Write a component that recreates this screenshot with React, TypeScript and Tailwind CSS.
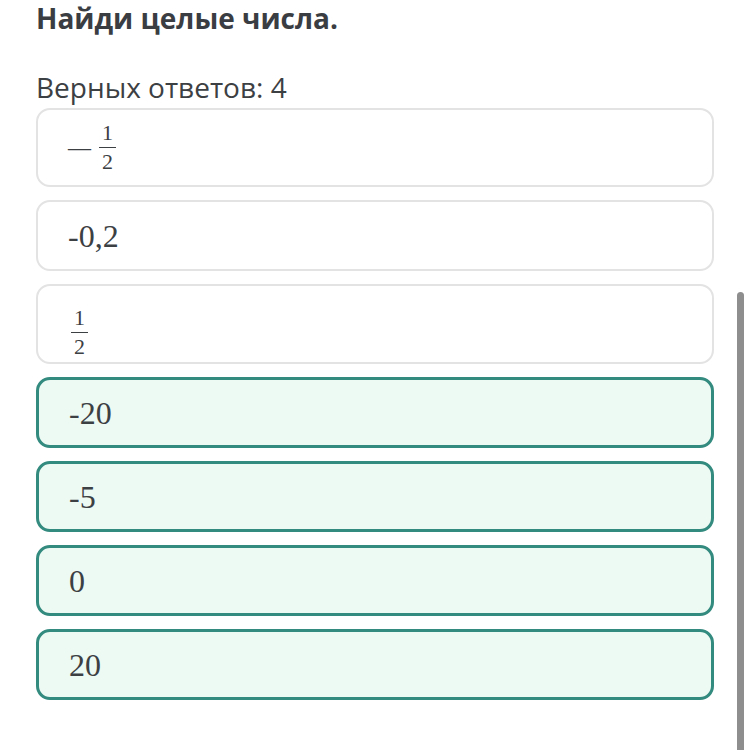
import React from 'react';

type Option = { id: string; content: React.ReactNode; picked?: boolean; h: string };

const Frac = () => (
  <span className="inline-flex flex-col items-center text-[22px] leading-none">
    <span className="pb-[3px]">1</span>
    <span className="w-[17px] border-t-[1.5px] border-[#3c4043]" />
    <span className="pt-[3px]">2</span>
  </span>
);

const options: Option[] = [
  {
    id: 'a',
    h: 'h-[79px]',
    content: (
      <span className="flex items-center gap-[8px]">
        <span className="text-[23px] leading-none">—</span>
        <Frac />
      </span>
    ),
  },
  { id: 'b', h: 'h-[71px]', content: '-0,2' },
  { id: 'c', h: 'h-[80px]', content: <span className="pl-[3px]"><Frac /></span> },
  { id: 'd', h: 'h-[71px]', content: '-20', picked: true },
  { id: 'e', h: 'h-[71px]', content: '-5', picked: true },
  { id: 'f', h: 'h-[71px]', content: '0', picked: true },
  { id: 'g', h: 'h-[71px]', content: '20', picked: true },
];

export default function App() {
  return (
    <div className="relative w-[750px] h-[750px] overflow-hidden bg-white text-[#3c4043]">
      <div className="pl-[36px] pr-[36px]">
        <h1
          className="text-[28px] font-bold leading-[32px] mt-[2px] text-[#3a3d42]"
          style={{ fontFamily: '"Open Sans", sans-serif' }}
        >
          Найди целые числа.
        </h1>
        <p
          className="text-[28px] leading-[32px] mt-[37px] text-[#3c4043]"
          style={{ fontFamily: '"Open Sans", sans-serif' }}
        >
          Верных ответов: 4
        </p>
        <ul className="flex flex-col gap-[13px] mt-[5px]" style={{ fontFamily: '"Liberation Serif", "DejaVu Serif", serif' }}>
          {options.map((o) => (
            <li
              key={o.id}
              className={
                'flex items-center pl-[30px] rounded-[14px] text-[32px] ' +
                o.h +
                ' ' +
                (o.picked
                  ? 'border-[3px] border-[#338a7e] bg-[#edf9f3]'
                  : 'border-2 border-[#e3e3e3] bg-white')
              }
            >
              {o.content}
            </li>
          ))}
        </ul>
      </div>
      {/* scrollbar */}
      <div className="absolute left-[737px] top-[292px] w-[7px] h-[470px] rounded-t-[4px] bg-[#8e8e8e]" />
    </div>
  );
}
